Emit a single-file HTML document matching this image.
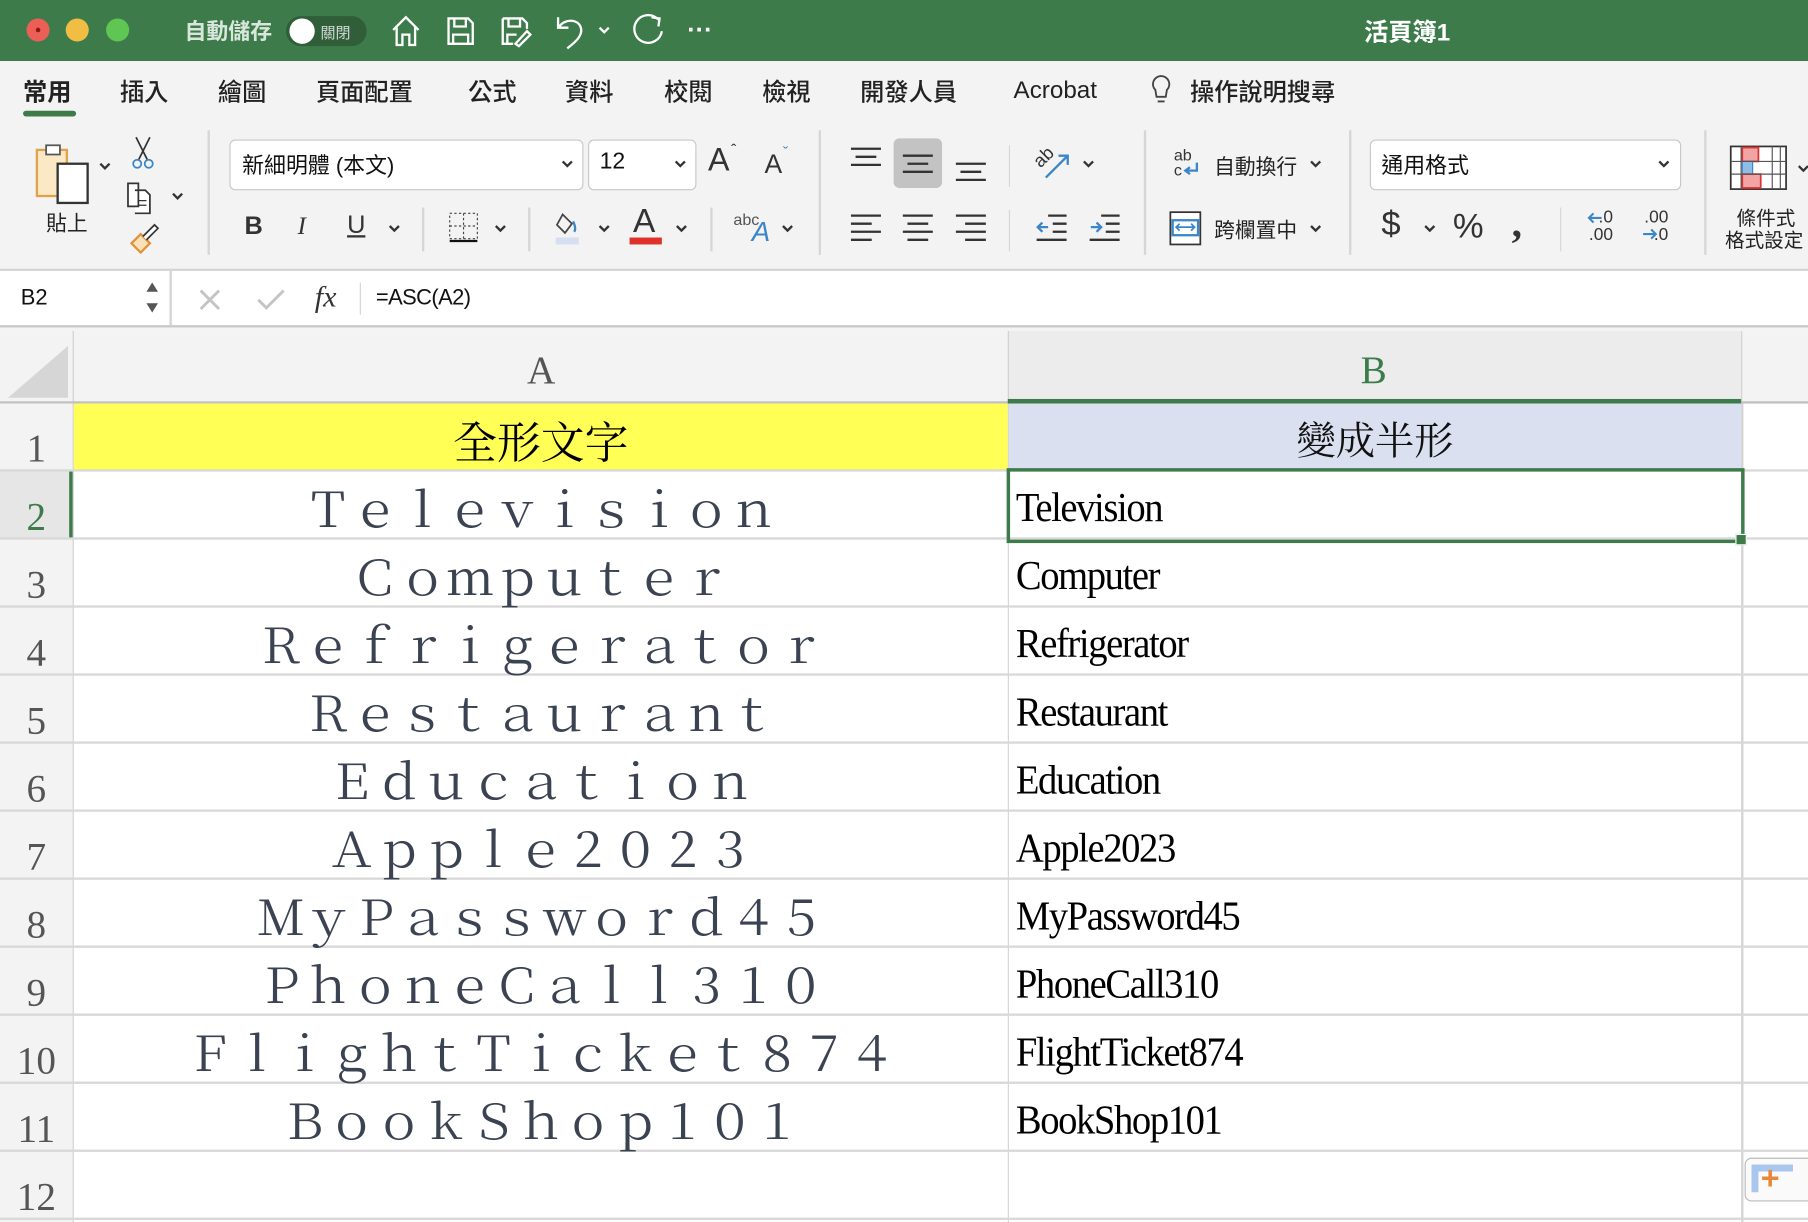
<!DOCTYPE html>
<html><head><meta charset="utf-8"><style>
html,body{margin:0;padding:0;width:1808px;height:1222px;overflow:hidden;background:#fff}
#w{position:absolute;left:0;top:0;width:1568px;height:1060px;transform:scale(1.15306);transform-origin:0 0;font-family:"Liberation Sans","Noto Sans CJK TC",sans-serif;background:#fff}
.a{position:absolute}
.t{position:absolute;white-space:nowrap}
.tab{position:absolute;top:64px;font-size:21px;color:#222;font-weight:500}
.dd{position:absolute;background:#fff;border:1px solid #c8c8c8;border-radius:5px}
.sep{position:absolute;width:2px;background:#d6d6d6}
.rh{position:absolute;left:0;width:63px;text-align:center;font-family:"Liberation Serif",serif;font-size:34px;color:#555}
.ca{position:absolute;left:64px;width:810px;text-align:center;font-family:"Noto Serif CJK TC","Noto Serif CJK SC",serif;font-size:41px;color:#3b4352;line-height:59px}
.cb{position:absolute;left:881px;font-family:"Liberation Serif",serif;font-size:36px;color:#000;line-height:59px;letter-spacing:-1.3px;transform:scaleX(0.93);transform-origin:0 0;white-space:nowrap}
.hl{position:absolute;left:0;width:1568px;height:2px;background:#d8d8d8}
svg{position:absolute;overflow:visible}
</style></head><body><div id="w">
<div class="a" style="left:0;top:0;width:1568px;height:53px;background:#3d7c4a"></div>
<div class="a" style="left:23px;top:16px;width:20px;height:20px;border-radius:50%;background:#ec5f57"></div>
<div class="a" style="left:31px;top:24px;width:4px;height:4px;border-radius:50%;background:#8c1a12"></div>
<div class="a" style="left:57px;top:16px;width:20px;height:20px;border-radius:50%;background:#f2bd43"></div>
<div class="a" style="left:92px;top:16px;width:20px;height:20px;border-radius:50%;background:#5fc653"></div>
<div class="t" style="left:160px;top:13px;font-size:19px;color:#d9e6dc;font-weight:bold">自動儲存</div>
<div class="a" style="left:248px;top:14px;width:70px;height:26px;border-radius:13px;background:#2f5e39"></div>
<div class="a" style="left:251px;top:16px;width:22px;height:22px;border-radius:50%;background:#fff"></div>
<div class="t" style="left:278px;top:18px;font-size:13px;color:#d0d8d2">關閉</div>
<svg style="left:338px;top:12px" width="28" height="30" viewBox="0 0 28 30"><path d="M3 14 L14 3 L25 14 M6 11 V27 H11 V18 H17 V27 H22 V11" fill="none" stroke="#fff" stroke-width="2"/></svg>
<svg style="left:386px;top:13px" width="26" height="28"><path d="M3 3 H20 L24 7 V25 H3 Z M8 3 V10 H18 V3 M7 25 V17 H20 V25" fill="none" stroke="#fff" stroke-width="2"/></svg>
<svg style="left:433px;top:13px" width="28" height="28"><path d="M3 3 H20 L24 7 V12 M3 3 V25 H12 M8 3 V10 H18 V3 M7 25 V17 H15 M14 25 L24 14 L27 17 L17 27 Z" fill="none" stroke="#fff" stroke-width="2"/></svg>
<svg style="left:480px;top:12px" width="30" height="32"><path d="M4 3 V12 H13 M5 11 C10 4 22 4 24 13 C25 20 18 25 12 30" fill="none" stroke="#fff" stroke-width="2"/></svg>
<svg style="left:518px;top:22px" width="12" height="8"><path d="M2 2 L6 6 L10 2" fill="none" stroke="#fff" stroke-width="2"/></svg>
<svg style="left:547px;top:11px" width="32" height="32"><path d="M24 6 A12 12 0 1 0 27 16 M18 4 L25 5 L24 12" fill="none" stroke="#fff" stroke-width="2"/></svg>
<div class="t" style="left:596px;top:13px;font-size:22px;color:#fff;font-weight:bold">···</div>
<div class="t" style="left:1183px;top:12px;font-size:21px;color:#fff;font-weight:bold">活頁簿1</div>
<div class="a" style="left:0;top:53px;width:1568px;height:180px;background:#f3f3f3"></div>
<div class="a" style="left:0;top:233px;width:1568px;height:2px;background:#d4d4d4"></div>
<div class="tab" style="left:20px;font-weight:bold;color:#222">常用</div>
<div class="a" style="left:20px;top:96px;width:46px;height:5px;border-radius:3px;background:#3d7c4a"></div>
<div class="tab" style="left:104px">插入</div>
<div class="tab" style="left:189px">繪圖</div>
<div class="tab" style="left:274px">頁面配置</div>
<div class="tab" style="left:406px">公式</div>
<div class="tab" style="left:490px">資料</div>
<div class="tab" style="left:576px">校閱</div>
<div class="tab" style="left:661px">檢視</div>
<div class="tab" style="left:746px">開發人員</div>
<div class="tab" style="left:879px;top:67px">Acrobat</div>
<svg style="left:997px;top:64px" width="20" height="30"><path d="M10 2 A7 7 0 0 0 5 14 L6 20 H14 L15 14 A7 7 0 0 0 10 2 Z M7 24 H13" fill="none" stroke="#444" stroke-width="1.6"/></svg>
<div class="tab" style="left:1032px">操作說明搜尋</div>
<svg style="left:28px;top:122px" width="60" height="58"><rect x="4" y="8" width="26" height="40" fill="#fbe8c4" stroke="#e0a24c" stroke-width="2"/><rect x="12" y="4" width="12" height="8" fill="#fff" stroke="#555" stroke-width="1.5"/><rect x="22" y="20" width="26" height="34" fill="#fff" stroke="#333" stroke-width="2"/></svg>
<svg style="left:85px;top:140px" width="12" height="8"><path d="M2 2 L6 6 L10 2" fill="none" stroke="#333" stroke-width="2"/></svg>
<div class="t" style="left:40px;top:180px;font-size:18px;color:#222">貼上</div>
<svg style="left:112px;top:117px" width="24" height="32"><path d="M6 2 L16 22 M18 2 L8 22" stroke="#333" stroke-width="1.5"/><circle cx="7" cy="25" r="3.5" fill="none" stroke="#3a86c9" stroke-width="1.5"/><circle cx="17" cy="25" r="3.5" fill="none" stroke="#3a86c9" stroke-width="1.5"/></svg>
<svg style="left:108px;top:157px" width="30" height="30"><path d="M3 2 H12 V22 H3 Z M9 8 H18 L22 12 V28 H9" fill="#fff" stroke="#333" stroke-width="1.5"/><path d="M12 17 H19 M12 21 H19" stroke="#333"/></svg>
<svg style="left:148px;top:166px" width="12" height="8"><path d="M2 2 L6 6 L10 2" fill="none" stroke="#333" stroke-width="2"/></svg>
<svg style="left:110px;top:193px" width="30" height="30"><path d="M4 18 L12 10 L20 18 L12 26 Z" fill="#fbe1b8" stroke="#e0913a" stroke-width="2"/><path d="M14 12 L24 2 L27 5 L17 15" fill="#fff" stroke="#333" stroke-width="1.5"/></svg>
<div class="sep" style="left:180px;top:113px;height:108px"></div>
<div class="dd" style="left:199px;top:121px;width:305px;height:42px"></div>
<div class="t" style="left:210px;top:129px;font-size:19px;color:#111">新細明體 (本文)</div>
<svg style="left:486px;top:138px" width="12" height="8"><path d="M2 2 L6 6 L10 2" fill="none" stroke="#333" stroke-width="2"/></svg>
<div class="dd" style="left:510px;top:121px;width:92px;height:42px"></div>
<div class="t" style="left:520px;top:129px;font-size:20px;color:#111">12</div>
<svg style="left:584px;top:138px" width="12" height="8"><path d="M2 2 L6 6 L10 2" fill="none" stroke="#333" stroke-width="2"/></svg>
<div class="t" style="left:614px;top:123px;font-size:28px;color:#333">A</div><div class="t" style="left:634px;top:122px;font-size:14px;color:#333">ˆ</div>
<div class="t" style="left:663px;top:129px;font-size:23px;color:#333">A</div><div class="t" style="left:679px;top:124px;font-size:14px;color:#3a86c9">ˇ</div>
<div class="t" style="left:212px;top:183px;font-size:22px;font-weight:bold;color:#333">B</div>
<div class="t" style="left:258px;top:183px;font-size:22px;font-style:italic;color:#333;font-family:'Liberation Serif',serif">I</div>
<div class="t" style="left:301px;top:182px;font-size:22px;color:#333;text-decoration:underline">U</div>
<svg style="left:336px;top:194px" width="12" height="8"><path d="M2 2 L6 6 L10 2" fill="none" stroke="#333" stroke-width="2"/></svg>
<div class="sep" style="left:366px;top:180px;height:38px"></div>
<svg style="left:388px;top:183px" width="28" height="28"><rect x="2" y="2" width="24" height="22" fill="none" stroke="#444" stroke-dasharray="2 2"/><path d="M14 2 V24 M2 13 H26" stroke="#444" stroke-dasharray="2 2"/><path d="M2 26 H26" stroke="#111" stroke-width="2"/></svg>
<svg style="left:428px;top:194px" width="12" height="8"><path d="M2 2 L6 6 L10 2" fill="none" stroke="#333" stroke-width="2"/></svg>
<div class="sep" style="left:458px;top:180px;height:38px"></div>
<svg style="left:480px;top:182px" width="30" height="32"><path d="M8 4 L16 12 L10 20 L3 13 Z" fill="none" stroke="#444" stroke-width="1.5"/><path d="M17 10 Q20 16 18 19" stroke="#3a86c9" stroke-width="2" fill="none"/><rect x="2" y="24" width="20" height="6" fill="#d5dff0"/></svg>
<svg style="left:518px;top:194px" width="12" height="8"><path d="M2 2 L6 6 L10 2" fill="none" stroke="#333" stroke-width="2"/></svg>
<div class="t" style="left:549px;top:176px;font-size:29px;color:#333">A</div>
<div class="a" style="left:546px;top:206px;width:28px;height:6px;background:#e0302a"></div>
<svg style="left:585px;top:194px" width="12" height="8"><path d="M2 2 L6 6 L10 2" fill="none" stroke="#333" stroke-width="2"/></svg>
<div class="sep" style="left:616px;top:180px;height:38px"></div>
<div class="t" style="left:636px;top:182px;font-size:14px;color:#555">abc</div>
<div class="t" style="left:652px;top:188px;font-size:24px;color:#3a86c9;font-style:italic">A</div>
<svg style="left:677px;top:194px" width="12" height="8"><path d="M2 2 L6 6 L10 2" fill="none" stroke="#333" stroke-width="2"/></svg>
<div class="sep" style="left:710px;top:113px;height:108px"></div>
<svg style="left:738px;top:128px" width="28" height="16"><path d="M0 1 H26 M4 8 H22 M0 15 H26" stroke="#333" stroke-width="2"/></svg>
<div class="a" style="left:775px;top:120px;width:42px;height:43px;border-radius:5px;background:#c3c3c3"></div>
<svg style="left:783px;top:134px" width="28" height="20"><path d="M0 1 H26 M4 8 H22 M0 15 H26" stroke="#333" stroke-width="2"/></svg>
<svg style="left:829px;top:141px" width="28" height="18"><path d="M0 1 H26 M4 8 H22 M0 15 H26" stroke="#333" stroke-width="2"/></svg>
<svg style="left:738px;top:186px" width="28" height="24"><path d="M0 1 H26 M0 8 H18 M0 15 H26 M0 22 H18" stroke="#333" stroke-width="2"/></svg>
<svg style="left:783px;top:186px" width="28" height="24"><path d="M0 1 H26 M4 8 H22 M0 15 H26 M4 22 H22" stroke="#333" stroke-width="2"/></svg>
<svg style="left:829px;top:186px" width="28" height="24"><path d="M0 1 H26 M8 8 H26 M0 15 H26 M8 22 H26" stroke="#333" stroke-width="2"/></svg>
<div class="sep" style="left:875px;height:36px;width:1px;top:126px"></div>
<div class="t" style="left:897px;top:128px;font-size:16px;color:#333;transform:rotate(-45deg)">ab</div>
<svg style="left:904px;top:130px" width="26" height="26"><path d="M3 24 L22 5 M14 5 H22 V13" fill="none" stroke="#3a86c9" stroke-width="2"/></svg>
<svg style="left:938px;top:138px" width="12" height="8"><path d="M2 2 L6 6 L10 2" fill="none" stroke="#333" stroke-width="2"/></svg>
<div class="sep" style="left:875px;top:182px;height:36px;width:1px"></div>
<svg style="left:899px;top:186px" width="28" height="24"><path d="M10 1 H26 M14 8 H26 M14 15 H26 M0 22 H26" stroke="#333" stroke-width="2"/><path d="M10 11 H1 M5 7 L1 11 L5 15" fill="none" stroke="#3a86c9" stroke-width="2"/></svg>
<svg style="left:945px;top:186px" width="28" height="24"><path d="M10 1 H26 M14 8 H26 M14 15 H26 M0 22 H26" stroke="#333" stroke-width="2"/><path d="M1 11 H10 M6 7 L10 11 L6 15" fill="none" stroke="#3a86c9" stroke-width="2"/></svg>
<div class="sep" style="left:992px;top:113px;height:108px"></div>
<div class="t" style="left:1018px;top:128px;font-size:14px;color:#333;line-height:13px">ab<br>c</div>
<svg style="left:1026px;top:140px" width="16" height="16"><path d="M12 1 V8 H3 M6 5 L2 8 L6 11" fill="none" stroke="#3a86c9" stroke-width="2"/></svg>
<div class="t" style="left:1053px;top:131px;font-size:18px;color:#222">自動換行</div>
<svg style="left:1135px;top:138px" width="12" height="8"><path d="M2 2 L6 6 L10 2" fill="none" stroke="#333" stroke-width="2"/></svg>
<svg style="left:1014px;top:183px" width="28" height="30"><rect x="1" y="1" width="26" height="28" fill="#fff" stroke="#333" stroke-width="1.5"/><rect x="3" y="8" width="22" height="13" fill="#fff" stroke="#3a86c9" stroke-width="2"/><path d="M6 14 H22 M9 11 L6 14 L9 17 M19 11 L22 14 L19 17" fill="none" stroke="#3a86c9" stroke-width="1.5"/></svg>
<div class="t" style="left:1053px;top:186px;font-size:18px;color:#222">跨欄置中</div>
<svg style="left:1135px;top:194px" width="12" height="8"><path d="M2 2 L6 6 L10 2" fill="none" stroke="#333" stroke-width="2"/></svg>
<div class="sep" style="left:1170px;top:113px;height:108px"></div>
<div class="dd" style="left:1188px;top:121px;width:268px;height:42px"></div>
<div class="t" style="left:1198px;top:129px;font-size:19px;color:#111">通用格式</div>
<svg style="left:1437px;top:138px" width="12" height="8"><path d="M2 2 L6 6 L10 2" fill="none" stroke="#333" stroke-width="2"/></svg>
<div class="t" style="left:1198px;top:178px;font-size:30px;color:#333">$</div>
<svg style="left:1234px;top:194px" width="12" height="8"><path d="M2 2 L6 6 L10 2" fill="none" stroke="#333" stroke-width="2"/></svg>
<div class="t" style="left:1260px;top:180px;font-size:30px;color:#333">%</div>
<div class="t" style="left:1311px;top:172px;font-size:36px;color:#333;font-weight:bold;font-family:'Liberation Serif',serif">,</div>
<div class="sep" style="left:1353px;top:180px;height:38px;width:1px"></div>
<div class="t" style="left:1378px;top:181px;font-size:15px;color:#333;line-height:15px">&nbsp;&nbsp;.0<br>.00</div>
<svg style="left:1376px;top:183px" width="14" height="12"><path d="M13 6 H2 M6 2 L2 6 L6 10" fill="none" stroke="#3a86c9" stroke-width="1.8"/></svg>
<div class="t" style="left:1426px;top:181px;font-size:15px;color:#333;line-height:15px">.00<br>&nbsp;&nbsp;.0</div>
<svg style="left:1424px;top:197px" width="14" height="12"><path d="M1 6 H12 M8 2 L12 6 L8 10" fill="none" stroke="#3a86c9" stroke-width="1.8"/></svg>
<div class="sep" style="left:1478px;top:113px;height:108px"></div>
<svg style="left:1500px;top:126px" width="50" height="40"><rect x="1" y="1" width="48" height="37" fill="#fff" stroke="#333" stroke-width="1.5"/><rect x="11" y="2" width="14" height="12" fill="#f2a3a3" stroke="#d33" stroke-width="1.5"/><rect x="11" y="14" width="9" height="11" fill="#8fbde6" stroke="#3a86c9"/><rect x="11" y="25" width="16" height="12" fill="#f2a3a3" stroke="#d33" stroke-width="1.5"/><path d="M10 1 V38 M37 1 V38 M44 1 V38 M1 14 H49 M1 25 H49" stroke="#555" stroke-width="1"/></svg>
<svg style="left:1558px;top:142px" width="12" height="8"><path d="M2 2 L6 6 L10 2" fill="none" stroke="#333" stroke-width="2"/></svg>
<div class="t" style="left:1506px;top:180px;font-size:17px;color:#222;line-height:19px">條件式<br><span style="margin-left:-10px">格式設定</span></div>
<div class="a" style="left:0;top:235px;width:1568px;height:47px;background:#fff"></div>
<div class="a" style="left:147px;top:235px;width:2px;height:47px;background:#d4d4d4"></div>
<div class="t" style="left:18px;top:248px;font-size:19px;color:#111">B2</div>
<svg style="left:126px;top:243px" width="12" height="30"><path d="M1 10 L6 2 L11 10 Z M1 20 L6 28 L11 20 Z" fill="#555"/></svg>
<svg style="left:172px;top:250px" width="20" height="20"><path d="M2 2 L18 18 M18 2 L2 18" stroke="#c4c4c4" stroke-width="2.5"/></svg>
<svg style="left:222px;top:250px" width="26" height="20"><path d="M2 10 L9 17 L24 2" fill="none" stroke="#c4c4c4" stroke-width="2.5"/></svg>
<div class="t" style="left:273px;top:243px;font-size:26px;color:#333;font-style:italic;font-family:'Liberation Serif',serif">fx</div>
<div class="a" style="left:312px;top:245px;width:1px;height:28px;background:#d4d4d4"></div>
<div class="t" style="left:326px;top:248px;font-size:19px;color:#111;letter-spacing:-0.5px">=ASC(A2)</div>
<div class="a" style="left:0;top:282px;width:1568px;height:2px;background:#c8c8c8"></div>
<div class="a" style="left:0;top:284px;width:1568px;height:3px;background:#f3f3f3"></div>
<div class="a" style="left:0;top:287px;width:1568px;height:61px;background:#f3f3f3"></div>
<div class="a" style="left:874px;top:287px;width:636px;height:61px;background:#ececec"></div>
<svg style="left:4px;top:298px" width="56" height="50"><path d="M55 2 V47 H3 Z" fill="#d6d6d6"/></svg>
<div class="a" style="left:63px;top:287px;width:1px;height:62px;background:#d0d0d0"></div>
<div class="a" style="left:874px;top:287px;width:1px;height:62px;background:#d0d0d0"></div>
<div class="a" style="left:1510px;top:287px;width:1px;height:62px;background:#d0d0d0"></div>
<div class="t" style="left:457px;top:303px;font-size:34px;color:#555;font-family:'Liberation Serif',serif">A</div>
<div class="t" style="left:1180px;top:303px;font-size:34px;color:#3d7c4a;font-family:'Liberation Serif',serif">B</div>
<div class="a" style="left:0;top:348px;width:1568px;height:2px;background:#c0c0c0"></div>
<div class="a" style="left:874px;top:346px;width:636px;height:4px;background:#3d7c4a"></div>
<div class="a" style="left:0;top:350px;width:63px;height:710px;background:#f3f3f3"></div>
<div class="a" style="left:63px;top:350px;width:1px;height:710px;background:#d0d0d0"></div>
<div class="a" style="left:0;top:408px;width:63px;height:59px;background:#e6e6e6"></div>
<div class="a" style="left:60px;top:408px;width:3px;height:59px;background:#3d7c4a"></div>
<div class="a" style="left:64px;top:350px;width:810px;height:58px;background:#ffff55"></div>
<div class="a" style="left:875px;top:350px;width:635px;height:58px;background:#dae0f0"></div>
<div class="a" style="left:874px;top:350px;width:1px;height:710px;background:#d4d4d4"></div>
<div class="a" style="left:1510px;top:350px;width:2px;height:710px;background:#d4d4d4"></div>
<div class="hl" style="top:407px"></div><div class="hl" style="top:466px"></div><div class="hl" style="top:525px"></div><div class="hl" style="top:584px"></div><div class="hl" style="top:643px"></div><div class="hl" style="top:702px"></div><div class="hl" style="top:761px"></div><div class="hl" style="top:820px"></div><div class="hl" style="top:879px"></div><div class="hl" style="top:938px"></div><div class="hl" style="top:997px"></div><div class="hl" style="top:1056px"></div>
<div class="rh" style="top:371px">1</div><div class="rh" style="top:430px;color:#3d7c4a">2</div><div class="rh" style="top:489px">3</div><div class="rh" style="top:548px">4</div><div class="rh" style="top:607px">5</div><div class="rh" style="top:666px">6</div><div class="rh" style="top:725px">7</div><div class="rh" style="top:784px">8</div><div class="rh" style="top:843px">9</div><div class="rh" style="top:902px">10</div><div class="rh" style="top:961px">11</div><div class="rh" style="top:1020px">12</div>
<div class="ca" style="top:351px;color:#000;font-size:38px">全形文字</div>
<div class="t" style="left:875px;width:635px;top:351px;text-align:center;font-family:'Noto Serif CJK TC','Noto Serif CJK SC',serif;font-size:34px;line-height:58px;color:#111">變成半形</div>
<div class="ca" style="top:410px">Ｔｅｌｅｖｉｓｉｏｎ</div>
<div class="ca" style="top:469px">Ｃｏｍｐｕｔｅｒ</div>
<div class="ca" style="top:528px">Ｒｅｆｒｉｇｅｒａｔｏｒ</div>
<div class="ca" style="top:587px">Ｒｅｓｔａｕｒａｎｔ</div>
<div class="ca" style="top:646px">Ｅｄｕｃａｔｉｏｎ</div>
<div class="ca" style="top:705px">Ａｐｐｌｅ２０２３</div>
<div class="ca" style="top:764px">ＭｙＰａｓｓｗｏｒｄ４５</div>
<div class="ca" style="top:823px">ＰｈｏｎｅＣａｌｌ３１０</div>
<div class="ca" style="top:882px">ＦｌｉｇｈｔＴｉｃｋｅｔ８７４</div>
<div class="ca" style="top:941px">ＢｏｏｋＳｈｏｐ１０１</div>
<div class="cb" style="top:411px">Television</div>
<div class="cb" style="top:470px">Computer</div>
<div class="cb" style="top:529px">Refrigerator</div>
<div class="cb" style="top:588px">Restaurant</div>
<div class="cb" style="top:647px">Education</div>
<div class="cb" style="top:706px">Apple2023</div>
<div class="cb" style="top:765px">MyPassword45</div>
<div class="cb" style="top:824px">PhoneCall310</div>
<div class="cb" style="top:883px">FlightTicket874</div>
<div class="cb" style="top:942px">BookShop101</div>
<div class="a" style="left:873px;top:406px;width:634px;height:59px;border:3px solid #3d7c4a"></div>
<div class="a" style="left:1505px;top:463px;width:8px;height:8px;background:#3d7c4a;border:1px solid #fff"></div>
<div class="a" style="left:1513px;top:1004px;width:60px;height:36px;border:1px solid #bbb;border-radius:6px;background:#fafafa"></div>
<div class="a" style="left:1519px;top:1010px;width:36px;height:6px;background:#a9c6ee"></div>
<div class="a" style="left:1519px;top:1010px;width:6px;height:24px;background:#a9c6ee"></div>
<div class="t" style="left:1527px;top:1006px;font-size:28px;color:#e8893a;font-weight:bold">+</div>
</div></body></html>
